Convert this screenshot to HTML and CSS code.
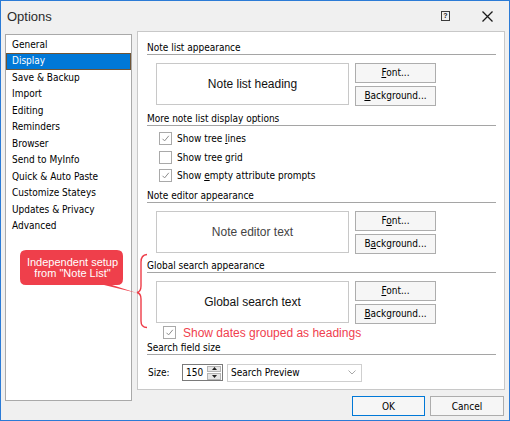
FILE: index.html
```html
<!DOCTYPE html>
<html>
<head>
<meta charset="utf-8">
<link rel="stylesheet" href="styles.css">
</head>
<body>
<div class="window">
  <div class="titlebar">
    <span class="title">Options</span>
    <span class="tb-help">?</span>
    <svg class="tb-close" width="11" height="11" viewBox="0 0 11 11"><path d="M0.5 0.5 L10.5 10.5 M10.5 0.5 L0.5 10.5" stroke="#1a1a1a" stroke-width="1.3"/></svg>
  </div>
  <div class="main">
    <ul class="nav">
      <li>General</li>
      <li class="sel">Display</li>
      <li>Save &amp; Backup</li>
      <li>Import</li>
      <li>Editing</li>
      <li>Reminders</li>
      <li>Browser</li>
      <li>Send to MyInfo</li>
      <li>Quick &amp; Auto Paste</li>
      <li>Customize Stateys</li>
      <li>Updates &amp; Privacy</li>
      <li>Advanced</li>
    </ul>
    <div class="right">
      <div class="panel">
        <div class="sec">Note list appearance</div>
        <div class="appear">
          <div class="preview">Note list heading</div>
          <div class="btns">
            <button class="btn"><u>F</u>ont...</button>
            <button class="btn"><u>B</u>ackground...</button>
          </div>
        </div>
        <div class="sec sec-more">More note list display options</div>
        <div class="checks">
          <div class="chk"><span class="box"><svg width="11" height="11" viewBox="0 0 11 11"><path d="M2.5 5.8 L4.6 7.9 L8.8 2.8" fill="none" stroke="#8c8c8c" stroke-width="1"/></svg></span><span>Show tree <u>l</u>ines</span></div>
          <div class="chk"><span class="box"></span><span>Show tree <u>g</u>rid</span></div>
          <div class="chk"><span class="box"><svg width="11" height="11" viewBox="0 0 11 11"><path d="M2.5 5.8 L4.6 7.9 L8.8 2.8" fill="none" stroke="#8c8c8c" stroke-width="1"/></svg></span><span>Show <u>e</u>mpty attribute prompts</span></div>
        </div>
        <div class="sec sec-editor">Note editor appearance</div>
        <div class="appear">
          <div class="preview preview-gray">Note editor text</div>
          <div class="btns">
            <button class="btn">F<u>o</u>nt...</button>
            <button class="btn">B<u>a</u>ckground...</button>
          </div>
        </div>
        <div class="sec sec-global">Global search appearance</div>
        <div class="appear">
          <div class="preview">Global search text</div>
          <div class="btns">
            <button class="btn"><u>F</u>ont...</button>
            <button class="btn"><u>B</u>ackground...</button>
          </div>
        </div>
        <div class="chk chk-dates"><span class="box"><svg width="11" height="11" viewBox="0 0 11 11"><path d="M2.5 5.8 L4.6 7.9 L8.8 2.8" fill="none" stroke="#8c8c8c" stroke-width="1"/></svg></span><span class="red">Show dates grouped as headings</span></div>
        <div class="sec">Search field size</div>
        <div class="size-row">
          <span class="size-label">Size:</span>
          <div class="spin">
            <span class="spin-val">150</span>
            <span class="spin-btns">
              <span class="spin-b"><svg width="5" height="3" viewBox="0 0 5 3"><path d="M0 3 L2.5 0 L5 3Z" fill="#222"/></svg></span>
              <span class="spin-b"><svg width="5" height="3" viewBox="0 0 5 3"><path d="M0 0 L2.5 3 L5 0Z" fill="#222"/></svg></span>
            </span>
          </div>
          <div class="combo">
            <span>Search Preview</span>
            <svg width="8" height="5" viewBox="0 0 8 5"><path d="M0.5 0.5 L4 4 L7.5 0.5" fill="none" stroke="#a8a8a8" stroke-width="1"/></svg>
          </div>
        </div>
      </div>
      <div class="footer">
        <button class="btn ok">OK</button>
        <button class="btn cancel">Cancel</button>
      </div>
    </div>
  </div>
  <svg class="overlay" width="140" height="90" viewBox="10 245 140 90">
    <path d="M26 250 H117 Q123 250 123 256 V279 Q123 285 117 285 H112 L137 293 L104 285 H26 Q20 285 20 279 V256 Q20 250 26 250 Z" fill="#ef3f4b"/>
    <path d="M147 254.5 Q141 255 141 262 L141 286 Q141 291.5 137 292.5 Q141 293.5 141 299 L141 321 Q141 327.5 147 327.5" fill="none" stroke="#ee3c48" stroke-width="1.4"/>
  </svg>
  <div class="callout-text">Independent setup<br>from "Note List"</div>
</div>
</body>
</html>
```
FILE: styles.css
```css
* { box-sizing: border-box; }
body { margin: 0; background: #f0f0f0; }
.window {
  position: relative;
  width: 510px;
  height: 421px;
  border: 1px solid #2b7bd6;
  background: #f0f0f0;
  display: flex;
  flex-direction: column;
  font-family: "DejaVu Sans Condensed", "DejaVu Sans", sans-serif;
  font-stretch: condensed;
  font-size: 10px;
  color: #000;
  overflow: hidden;
}
.titlebar {
  height: 30px;
  flex: none;
  display: flex;
  align-items: center;
  padding-left: 6px;
}
.title {
  flex: 1;
  font-family: "Liberation Sans", Arial, sans-serif;
  font-stretch: normal;
  font-size: 13px;
  color: #2b2b2b;
}
.tb-help {
  width: 9px;
  height: 10px;
  border: 1px solid #3a3a3a;
  font-family: "Liberation Sans", sans-serif;
  font-size: 7px;
  font-weight: bold;
  line-height: 8px;
  text-align: center;
  color: #222;
  margin-right: 32px;
}
.tb-close { margin-right: 16px; }
.main {
  flex: 1;
  display: flex;
  gap: 5px;
  padding: 0 4px;
  min-height: 0;
}
.nav {
  width: 127px;
  height: 367px;
  margin: 3px 0 0;
  padding: 1.5px 0 0;
  list-style: none;
  background: #fff;
  border: 1px solid #a9a9a9;
}
.nav li {
  height: 16.5px;
  line-height: 16.5px;
  padding-left: 6px;
  white-space: nowrap;
}
.nav li.sel {
  background: #0078d7;
  color: #fff;
  border: 1px solid #6e5436;
  line-height: 14.5px;
  padding-left: 5px;
}
.right {
  width: 368px;
  display: flex;
  flex-direction: column;
}
.panel {
  height: 359px;
  background: #fff;
  border: 1px solid #c8c8c8;
  padding: 9.5px 8px 0 9px;
}
.sec {
  line-height: 12px;
  height: 13px;
  border-bottom: 1px solid #a5a5a5;
  white-space: nowrap;
}
.sec-more { margin-top: 7px; }
.sec-editor { margin-top: 4.5px; }
.sec-global { margin-top: 6px; }
.appear {
  display: flex;
  margin: 8px 0 0 9px;
}
.preview {
  width: 193px;
  height: 42px;
  border: 1px solid #c8c8c8;
  display: flex;
  align-items: center;
  justify-content: center;
  font-family: "Liberation Sans", Arial, sans-serif;
  font-stretch: normal;
  font-size: 12px;
  color: #111;
}
.preview-gray { color: #444; }
.btns {
  display: flex;
  flex-direction: column;
  gap: 3px;
  margin-left: 6px;
}
.btn {
  height: 20px;
  width: 81px;
  padding: 0;
  border: 1px solid #adadad;
  background: #f6f6f6;
  font-family: inherit;
  font-stretch: condensed;
  font-size: 10px;
  color: #000;
}
.checks {
  margin-top: 4px;
  padding-left: 12px;
}
.chk {
  height: 18.5px;
  display: flex;
  align-items: center;
  gap: 5px;
  white-space: nowrap;
}
.box {
  width: 13px;
  height: 13px;
  flex: none;
  border: 1px solid #a9a9a9;
  background: #fff;
  display: flex;
}
.chk-dates {
  height: 18px;
  padding-left: 16px;
  gap: 7px;
}
.red {
  font-family: "Liberation Sans", Arial, sans-serif;
  font-stretch: normal;
  font-size: 12px;
  color: #f0404e;
}
.size-row {
  display: flex;
  align-items: center;
  height: 18px;
  margin-top: 9px;
  padding-left: 1px;
}
.size-label { width: 34px; }
.spin {
  width: 41px;
  height: 17px;
  border: 1px solid #7a7a7a;
  background: #fff;
  display: flex;
  align-items: center;
  justify-content: space-between;
  padding: 0 1px 0 3px;
}
.spin-btns {
  display: flex;
  flex-direction: column;
  gap: 1px;
}
.spin-b {
  width: 14px;
  height: 6.5px;
  background: #e6e6e6;
  border: 1px solid #b5b5b5;
  display: flex;
  align-items: center;
  justify-content: center;
}
.combo {
  width: 135px;
  height: 18px;
  margin-left: 4px;
  border: 1px solid #cfcfcf;
  background: #fff;
  display: flex;
  align-items: center;
  justify-content: space-between;
  padding: 0 5px 0 3px;
}
.footer {
  display: flex;
  justify-content: flex-end;
  gap: 5px;
  margin-top: 6px;
  padding-right: 1px;
}
.btn.ok { width: 73px; border-color: #0078d7; }
.btn.cancel { width: 74px; }
.overlay {
  position: absolute;
  left: 9px;
  top: 244px;
}
.callout-text {
  position: absolute;
  left: 19px;
  top: 256px;
  width: 105px;
  text-align: center;
  font-family: "Liberation Sans", Arial, sans-serif;
  font-stretch: normal;
  font-size: 11px;
  line-height: 11px;
  color: #fff;
}
```
